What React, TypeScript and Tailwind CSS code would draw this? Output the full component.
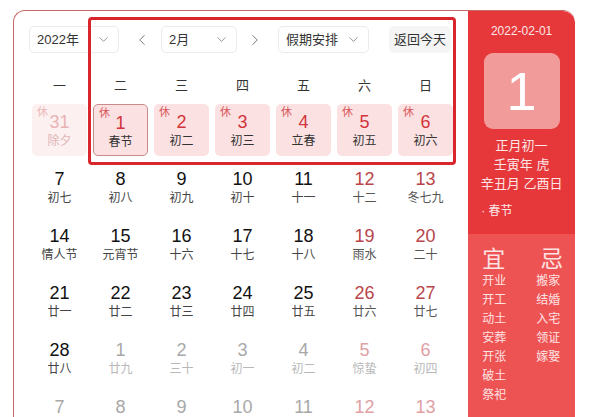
import { ChevronDown, ChevronLeft, ChevronRight } from 'lucide-react';

type Day = {
  n: number;
  lunar: string;
  rest?: boolean;
  tone: 'normal' | 'weekend' | 'fade' | 'fadeRed';
  selected?: boolean;
};

const font = { fontFamily: '"Liberation Sans", "Noto Sans CJK SC", sans-serif' };

const weeks: Day[][] = [
  [
    { n: 31, lunar: '除夕', rest: true, tone: 'fade' },
    { n: 1, lunar: '春节', rest: true, tone: 'normal', selected: true },
    { n: 2, lunar: '初二', rest: true, tone: 'normal' },
    { n: 3, lunar: '初三', rest: true, tone: 'normal' },
    { n: 4, lunar: '立春', rest: true, tone: 'normal' },
    { n: 5, lunar: '初五', rest: true, tone: 'normal' },
    { n: 6, lunar: '初六', rest: true, tone: 'normal' },
  ],
  [
    { n: 7, lunar: '初七', tone: 'normal' },
    { n: 8, lunar: '初八', tone: 'normal' },
    { n: 9, lunar: '初九', tone: 'normal' },
    { n: 10, lunar: '初十', tone: 'normal' },
    { n: 11, lunar: '十一', tone: 'normal' },
    { n: 12, lunar: '十二', tone: 'weekend' },
    { n: 13, lunar: '冬七九', tone: 'weekend' },
  ],
  [
    { n: 14, lunar: '情人节', tone: 'normal' },
    { n: 15, lunar: '元宵节', tone: 'normal' },
    { n: 16, lunar: '十六', tone: 'normal' },
    { n: 17, lunar: '十七', tone: 'normal' },
    { n: 18, lunar: '十八', tone: 'normal' },
    { n: 19, lunar: '雨水', tone: 'weekend' },
    { n: 20, lunar: '二十', tone: 'weekend' },
  ],
  [
    { n: 21, lunar: '廿一', tone: 'normal' },
    { n: 22, lunar: '廿二', tone: 'normal' },
    { n: 23, lunar: '廿三', tone: 'normal' },
    { n: 24, lunar: '廿四', tone: 'normal' },
    { n: 25, lunar: '廿五', tone: 'normal' },
    { n: 26, lunar: '廿六', tone: 'weekend' },
    { n: 27, lunar: '廿七', tone: 'weekend' },
  ],
  [
    { n: 28, lunar: '廿八', tone: 'normal' },
    { n: 1, lunar: '廿九', tone: 'fade' },
    { n: 2, lunar: '三十', tone: 'fade' },
    { n: 3, lunar: '初一', tone: 'fade' },
    { n: 4, lunar: '初二', tone: 'fade' },
    { n: 5, lunar: '惊蛰', tone: 'fadeRed' },
    { n: 6, lunar: '初四', tone: 'fadeRed' },
  ],
  [
    { n: 7, lunar: '初五', tone: 'fade' },
    { n: 8, lunar: '初六', tone: 'fade' },
    { n: 9, lunar: '初七', tone: 'fade' },
    { n: 10, lunar: '初八', tone: 'fade' },
    { n: 11, lunar: '初九', tone: 'fade' },
    { n: 12, lunar: '初十', tone: 'fadeRed' },
    { n: 13, lunar: '十一', tone: 'fadeRed' },
  ],
];

const numColor = {
  normal: 'text-[#111]',
  weekend: 'text-[#b9454a]',
  fade: 'text-[#a8a8a8]',
  fadeRed: 'text-[#e0a0a4]',
};

const lunarColor = {
  normal: 'text-[#444]',
  weekend: 'text-[#555]',
  fade: 'text-[#b8b8b8]',
  fadeRed: 'text-[#b8b8b8]',
};

function DayCell({ day }: { day: Day }) {
  const restRed = day.rest && day.tone === 'normal';
  return (
    <div
      className={`relative flex h-[52px] w-[55px] flex-col items-center rounded-[5px] ${
        day.rest ? (day.tone === 'fade' ? 'bg-[#fcf0f0]' : 'bg-[#fbe1e2]') : ''
      } ${day.selected ? 'border border-[#c98a8c]' : ''}`}
    >
      {day.rest && (
        <span
          className={`absolute left-[5px] top-[3px] text-[11px] leading-none ${
            day.tone === 'fade' ? 'text-[#eababa]' : 'text-[#d9585c]'
          }`}
        >
          休
        </span>
      )}
      <span
        className={`mt-[8px] text-[18px] leading-[20px] ${
          restRed ? 'text-[#d3343b]' : day.rest ? 'text-[#e7b3b5]' : numColor[day.tone]
        }`}
      >
        {day.n}
      </span>
      <span
        className={`mt-[1px] text-[12px] leading-[16px] ${
          restRed ? 'text-[#333]' : day.rest ? 'text-[#e0b5b7]' : lunarColor[day.tone]
        }`}
      >
        {day.lunar}
      </span>
    </div>
  );
}

function Select({ label, width }: { label: string; width: string }) {
  return (
    <div
      className={`flex h-[27px] ${width} items-center justify-between rounded-[5px] border border-[#ebebeb] bg-white pl-[7px] pr-[7px] text-[13px] text-[#333]`}
    >
      <span>{label}</span>
      <ChevronDown size={15} strokeWidth={1.4} className="text-[#888]" />
    </div>
  );
}

const yi = ['开业', '开工', '动土', '安葬', '开张', '破土', '祭祀'];
const ji = ['搬家', '结婚', '入宅', '领证', '嫁娶'];

export default function App() {
  return (
    <div className="min-h-[417px] bg-white pl-[13px] pt-[10px]" style={font}>
      <div className="flex h-[420px] w-[562px] overflow-hidden rounded-tl-[12px] rounded-tr-[12px] border-l border-t border-[#c46a66]">
        <div className="relative w-[455px] pl-[15px] pt-[15px]">
          <div className="flex items-center">
            <Select label="2022年" width="w-[90px]" />
            <ChevronLeft size={18} strokeWidth={1.3} className="ml-[14px] text-[#777]" />
            <div className="ml-[10px]">
              <Select label="2月" width="w-[76px]" />
            </div>
            <ChevronRight size={18} strokeWidth={1.3} className="ml-[9px] text-[#777]" />
            <div className="ml-[14px]">
              <Select label="假期安排" width="w-[91px]" />
            </div>
            <div className="ml-[20px] flex h-[27px] w-[62px] items-center justify-center rounded-[5px] bg-[#f5f5f5] text-[13px] text-[#333]">
              返回今天
            </div>
          </div>

          <div className="mt-[21px] grid w-[427px] grid-cols-7 text-[13px] leading-[24px] text-[#333]">
            {['一', '二', '三', '四', '五', '六', '日'].map((w) => (
              <div key={w} className="text-center">
                {w}
              </div>
            ))}
          </div>

          <div className="mt-[6px] flex w-[427px] flex-col gap-[5px]">
            {weeks.map((week, i) => (
              <div key={i} className="grid grid-cols-7 justify-items-center">
                {week.map((day, j) => (
                  <DayCell key={j} day={day} />
                ))}
              </div>
            ))}
          </div>

          <div className="pointer-events-none absolute left-[74px] top-[6px] h-[148px] w-[368px] rounded-[4px] border-[3px] border-[#d8262c]" />
        </div>

        <div className="flex w-[107px] flex-col overflow-hidden rounded-tr-[12px]">
          <div className="flex h-[223px] flex-col items-center bg-[#e6383b] text-[#fde6e6]">
            <div className="mt-[12px] text-[12px] leading-[16px]">2022-02-01</div>
            <div className="mt-[14px] flex h-[76px] w-[76px] items-center justify-center rounded-[9px] bg-[#f29b9b] text-[54px] leading-none text-white">
              1
            </div>
            <div className="mt-[7px] text-[13px] leading-[19px]">正月初一</div>
            <div className="text-[13px] leading-[19px]">壬寅年 虎</div>
            <div className="text-[13px] leading-[20px]">辛丑月 乙酉日</div>
            <div className="mt-[9px] self-start pl-[13px] text-[12px] leading-[16px]">· 春节</div>
          </div>
          <div className="flex flex-1 bg-[#ee5353] pl-[14px] pt-[12px] text-[#fde3e3]">
            <div className="flex w-[54px] flex-col">
              <div className="text-[23px] leading-[26px]">宜</div>
              {yi.map((t) => (
                <div key={t} className="text-[12px] leading-[19px]">
                  {t}
                </div>
              ))}
            </div>
            <div className="flex flex-col">
              <div className="pl-[4px] text-[23px] leading-[26px]">忌</div>
              {ji.map((t) => (
                <div key={t} className="text-[12px] leading-[19px]">
                  {t}
                </div>
              ))}
            </div>
          </div>
        </div>
      </div>
    </div>
  );
}
